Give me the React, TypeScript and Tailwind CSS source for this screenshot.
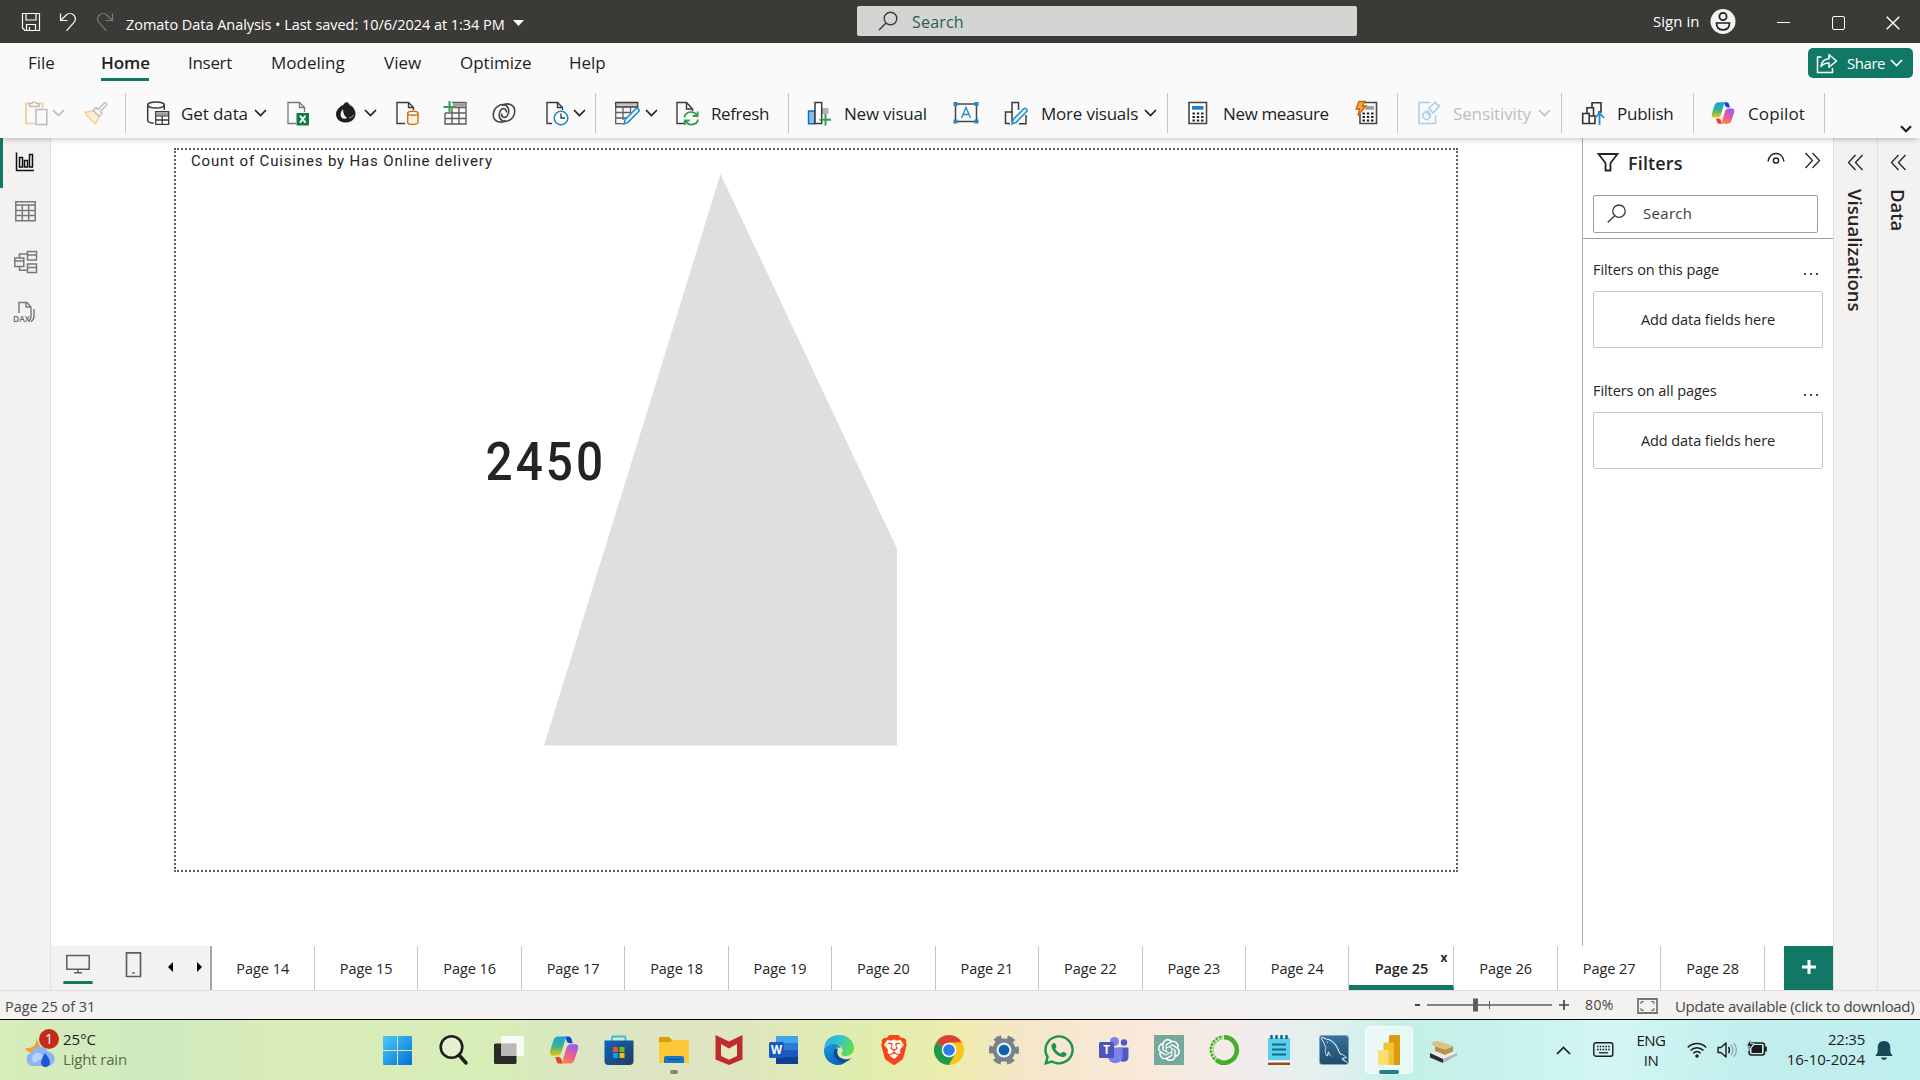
import React, { ReactNode } from 'react';
import { SiOpenai, SiBrave } from 'react-icons/si';
import { FaWhatsapp } from 'react-icons/fa';
import { GrMysql } from 'react-icons/gr';

const DARK = '#3b3a39';
const BLUE = '#1e8bcd';
const GREEN = '#2f9e50';

type IconProps = { className?: string; size?: number; children: ReactNode };

function Icon({ className = '', size = 24, children }: IconProps) {
  return (
    <svg
      viewBox={`0 0 ${size} ${size}`}
      width={size}
      height={size}
      fill="none"
      strokeWidth="1.3"
      className={`block shrink-0 overflow-visible ${className}`}
    >
      {children}
    </svg>
  );
}

function Chevron({ className = '', color = '#201f1e' }: { className?: string; color?: string }) {
  return (
    <svg width="13" height="8" viewBox="0 0 13 8" fill="none" className={`block shrink-0 ${className}`}>
      <path d="M1 1l5.5 5.5L12 1" stroke={color} strokeWidth="1.7" />
    </svg>
  );
}

function Divider({ className = '' }: { className?: string }) {
  return <div className={`h-10 w-px shrink-0 bg-[#c8c6c4] ${className}`} />;
}

function Label({ className = '', children }: { className?: string; children: ReactNode }) {
  return <span className={`mt-px shrink-0 pl-px text-[17px] whitespace-nowrap ${className}`}>{children}</span>;
}

function Pencil() {
  return (
    <path
      d="M9 23l1.2-4.6L20.6 8a1.9 1.9 0 0 1 2.8 2.8L13 21.4 9 23z"
      fill="#e8f4fc"
      stroke={BLUE}
      strokeWidth="1.5"
    />
  );
}

function CopilotMark({ className, size = 24 }: { className?: string; size?: number }) {
  return (
    <svg viewBox="0 0 24 24" width={size} height={size} className={`block shrink-0 ${className ?? ''}`}>
      <defs>
        <linearGradient id="cpA" x1="0" y1="0" x2="0" y2="1">
          <stop offset="0" stopColor="#12a4e8" />
          <stop offset="0.5" stopColor="#39b38a" />
          <stop offset="1" stopColor="#f2c511" />
        </linearGradient>
        <linearGradient id="cpB" x1="0.6" y1="0" x2="0.2" y2="1">
          <stop offset="0" stopColor="#9b5bf0" />
          <stop offset="0.5" stopColor="#ee5a9b" />
          <stop offset="1" stopColor="#ff8a3c" />
        </linearGradient>
      </defs>
      <path d="M13 1.2h2.6c1.4 0 2 .8 2.5 2.3l.9 3h-2.2c-1.6 0-2.4-.8-2.9-2.4L13 1.2z" fill="#1546c9" />
      <path d="M7.6 1.2h7.6c-1.2 0-1.8 1-2.2 2.4L10.2 13c-.6 2.3-1.6 3.6-4 3.6H2.9C.8 16.6.3 14.7.9 12.6L3.4 4.7C4.2 2.2 5.4 1.2 7.6 1.2z" fill="url(#cpA)" />
      <path d="M11 22.8H8.4c-1.4 0-2-.8-2.5-2.3L5 17.5h2.2c1.6 0 2.4.8 2.9 2.4l.9 2.9z" fill="#e8412c" />
      <path d="M16.4 22.8H8.8c1.2 0 1.8-1 2.2-2.4L13.8 11c.6-2.3 1.6-3.6 4-3.6h3.3c2.1 0 2.6 1.9 2 4l-2.5 7.9c-.8 2.5-2 3.5-4.2 3.5z" fill="url(#cpB)" />
    </svg>
  );
}

function TitleBar() {
  return (
    <header className="flex h-[43px] shrink-0 items-start bg-[#3b3a37] text-white">
      <Icon size={20} className="mt-3 ml-[21px]">
        <path d="M1.5 1.5h17v17H4L1.5 16zM5 1.5V8h10V1.5M5.5 18.5v-6h9v6M8.500 15v3" stroke="#fff" strokeWidth="1.2" />
      </Icon>
      <Icon size={20} className="mt-3 ml-[18px]">
        <path d="M1.5 1.5v7h7M1.8 8.2L7 3.2C9.2 1 12.5.9 14.7 3c2.3 2.2 2.3 5.5.1 7.7L7.500 18.800" stroke="#fff" strokeWidth="1.2" />
      </Icon>
      <Icon size={20} className="mt-3 ml-[16px]">
        <path d="M17.5 1.5v7h-7M17.2 8.2L12 3.2C9.800 1 6.500.9 4.300 3 2 5.200 2 8.500 4.200 10.700l7.300 8.100" stroke="#7d7b78" strokeWidth="1.2" />
      </Icon>
      <span className="mt-3.5 ml-[11px] w-[384px] text-[14.5px] leading-[21px] tracking-[-0.045px] whitespace-nowrap">
        Zomato Data Analysis • Last saved: 10/6/2024 at 1:34 PM
      </span>
      <svg width="11" height="6" viewBox="0 0 11 6" className="mt-5 ml-[3px]">
        <path d="M0 0h11L5.5 6z" fill="#fff" />
      </svg>
      <div className="mt-1.5 ml-[333px] flex h-[30px] w-[500px] items-center rounded-[2px] bg-[#d4d4d2] text-[#2a5d54]">
        <Icon size={20} className="ml-[21px]">
          <path d="M1 19l7-7" stroke="#3b3a39" strokeWidth="1.5" />
          <circle cx="12.5" cy="7.5" r="6.3" stroke="#3b3a39" strokeWidth="1.4" />
        </Icon>
        <span className="mt-px ml-[14px] text-base tracking-[0.2px]">Search</span>
      </div>
      <span className="mt-[11px] ml-[296px] w-[49px] text-[15px] leading-[21px] tracking-[0.05px] whitespace-nowrap">Sign in</span>
      <Icon size={26} className="mt-[9px] ml-2">
        <circle cx="13" cy="12.5" r="12.5" fill="#f3f2f1" />
        <circle cx="13" cy="7.5" r="3.6" stroke="#201f1e" strokeWidth="1.7" />
        <path d="M6.5 14h13c0 4.5-2.5 6.8-6.5 6.800S6.500 18.500 6.500 14z" stroke="#201f1e" strokeWidth="1.7" />
      </Icon>
      <div className="mt-[22px] ml-[41px] h-px w-[13px] bg-white" />
      <div className="mt-[16px] ml-[42px] h-[14px] w-[13px] rounded-[2px] border-[1.5px] border-white" />
      <Icon size={14} className="mt-[16px] ml-[41px]">
        <path d="M.7.7l12.600 12.600M13.300.7L.7 13.300" stroke="#fff" strokeWidth="1.4" />
      </Icon>
    </header>
  );
}

function MenuTabs() {
  return (
    <nav className="flex h-[45px] shrink-0 items-center bg-[#fafafa] pb-[5px] text-[17px] whitespace-nowrap text-[#201f1e]">
      <span className="ml-[28px] w-[73px]">File</span>
      <span className="relative w-[87px] font-semibold tracking-[-0.05px]">
        Home
        <span className="absolute -bottom-[5px] left-0 h-[3px] w-12 bg-[#117865]" />
      </span>
      <span className="w-[83px] tracking-[-0.3px]">Insert</span>
      <span className="w-[113px]">Modeling</span>
      <span className="w-[76px]">View</span>
      <span className="w-[109px]">Optimize</span>
      <span className="w-[60px]">Help</span>
      <button className="mr-[7px] ml-auto flex h-[30px] w-[105px] items-center rounded-[5px] bg-[#117865] text-[15px] text-white">
        <Icon size={22} className="ml-2">
          <path d="M5.5 5h-4v15.5h15V16" stroke="#fff" strokeWidth="1.5" />
          <path d="M5 14.5c.5-4.5 3-7.5 8-7.8V2.5L20.5 9 13 15.300v-4.200c-3.500 0-6 1-8 3.400z" stroke="#fff" strokeWidth="1.5" strokeLinejoin="round" />
        </Icon>
        <span className="ml-[9px] w-[38px] tracking-[-0.46px]">Share</span>
        <Chevron className="ml-[5px]" color="#fff" />
      </button>
    </nav>
  );
}

function Ribbon() {
  return (
    <div className="relative z-10 flex h-[50px] shrink-0 items-center bg-[#fafafa] text-[#201f1e] shadow-[0_5px_5px_-3px_rgba(0,0,0,0.2)]">
      <Icon className="ml-6">
        <path d="M5.5 2.500H2v20h9M15 2.500h3.500V7" stroke="#f5cfa3" strokeWidth="2" />
        <path d="M5.500 5.500v-3h2.700a2.200 2.200 0 0 1 4.200 0h2.700v3z" stroke="#bdbbb9" />
        <path d="M12 8.500h10.800v15H12z" stroke="#bdbbb9" strokeWidth="1.5" />
      </Icon>
      <Chevron className="ml-1" color="#bdbbb9" />
      <Icon className="ml-[19px]">
        <path d="M1 11.500l8.500-2 6 6-4 7.300C8 20 4 17 1 11.500z" fill="#fdebd6" stroke="#f5c999" />
        <path d="M9 9.500l3-3 2 2 6-6.300c1.500-1.400 3.700.6 2.300 2.200l-6 6.200 1.700 1.800-2.700 3z" stroke="#bdbbb9" />
      </Icon>
      <Divider className="ml-[17px]" />
      <Icon className="ml-5">
        <ellipse cx="10" cy="4" rx="8.300" ry="3" stroke={DARK} strokeWidth="1.5" />
        <path d="M1.700 4v15.500c0 1.300 2.500 2.500 6 2.800M18.300 4v5" stroke={DARK} strokeWidth="1.5" />
        <path d="M9.700 10.700h13v12.600h-13zM9.700 14.800h13M9.700 19h13M16.200 14.800v8.500" fill="#fff" stroke={DARK} />
        <path d="M10.300 11.300h11.800v3H10.300z" fill="#a19f9d" />
      </Icon>
      <Label className="ml-[10px] w-[72px] tracking-[-0.1px]">Get data</Label>
      <Chevron className="ml-0.5" />
      <Icon className="ml-[19px]">
        <path d="M10 22.500H2V1.500h11.500l5 5V11M13.500 1.500v5h5" stroke="#797775" />
        <path d="M10.500 12H23v12.500H10.500z" fill="#107c41" />
        <path d="M14 14.700l5.500 7M19.500 14.700l-5.500 7" stroke="#fff" strokeWidth="1.9" />
      </Icon>
      <Icon className="ml-[25px]">
        <path d="M5 6C6 4.500 8 4.500 9 3c1.500-2.500 4-2 5 0 .8 1.500 3 1.500 4.500 4 2.300 3 2.800 7 .7 10.300-2.200 3.300-5.500 4.400-9 4.200C4.500 21 1 18 1 13c0-3 1.500-5 4-7z" fill="#201f1e" />
        <path d="M8 8c-2.500 3-3.300 6.500-1 9 1.500 1.300 4 1 5-.5-2.500-1-4-4-4-8.500z" fill="#f3f2f1" />
        <path d="M14 17c2.500-.3 4-1.500 5-3.500" stroke="#6b6967" />
      </Icon>
      <Chevron className="ml-[5px]" />
      <Icon className="ml-[18px]">
        <path d="M10 22.500H2V1.500h11.500l5 5V9M13.500 1.500v5h5" stroke={DARK} strokeWidth="1.4" />
        <path d="M12.700 12.300v9.200c0 2.500 10.300 2.500 10.300 0v-9.200" fill="#fdf0e2" stroke="#d0700f" strokeWidth="1.4" />
        <ellipse cx="17.850" cy="12.300" rx="5.150" ry="2" fill="#fff" stroke="#d0700f" strokeWidth="1.4" />
      </Icon>
      <Icon className="ml-6">
        <path d="M9 1.500h14v21.500H2V12M2 12h21M2 17.500h21M9 6.500V23M16 6.500V23M11 6.500h12" stroke="#605e5c" strokeWidth="1.4" />
        <path d="M10 2.200h12.300v3.600H10z" fill="#a19f9d" />
        <path d="M6.500 0v12M.5 6h12" stroke={GREEN} strokeWidth="2" />
      </Icon>
      <Icon className="ml-[25px]">
        <path d="M14 19.500C8.500 23 1 20.500 1.300 13.500 1.600 6.500 8.500 1.800 13.500 4.300c4 2 4 7.500 1.700 10.700-2 2.500-6 1.500-5.700-2.500" stroke="#484644" strokeWidth="1.600" />
        <path d="M10 4.500C15.500 1 23 3.500 22.700 10.500c-.3 7-7.200 11.700-12.200 9.200-4-2-4-7.500-1.700-10.700 2-2.500 6-1.500 5.700 2.500" stroke="#484644" strokeWidth="1.600" />
      </Icon>
      <Icon className="ml-[29px]">
        <path d="M7 22.500H2V1.500h10.500l5 5V9M12.500 1.500v5h5" stroke={DARK} strokeWidth="1.4" />
        <circle cx="16" cy="17" r="6.800" fill="#fff" stroke={BLUE} strokeWidth="1.6" />
        <path d="M16 12.500V17h4" stroke={DARK} strokeWidth="1.4" />
      </Icon>
      <Chevron className="ml-1" />
      <Divider className="ml-[9px]" />
      <Icon className="ml-[19px]">
        <path d="M.7 1.500h22V6H.7z" fill="#c8c6c4" stroke={DARK} />
        <path d="M.7 6v16.700H8M22.700 6v2M1 11.500h15M1 17h10M8 6.500V19M15.500 6.500v5" stroke="#605e5c" />
        <Pencil />
      </Icon>
      <Chevron className="ml-[6px]" />
      <Icon className="ml-[17px]">
        <path d="M9 22.500H2V1.500h9.500l6 6.500M11.500 1.500V8h6v2" stroke={DARK} strokeWidth="1.4" />
        <path d="M9.500 16.500c.7-6 9.500-7.500 12.500-2M22.700 10.500v4.500h-5M23 18.500c-1 5.800-9.500 7-12.300 1.500M9.800 24v-4.500h5" stroke={GREEN} strokeWidth="1.8" />
      </Icon>
      <Label className="ml-[11px] w-[60px] tracking-[-0.4px]">Refresh</Label>
      <Divider className="ml-[18px]" />
      <Icon className="ml-[18px]">
        <path d="M1.500 10h6.300v12.700H1.500z" fill="#83beec" stroke="#106ebe" strokeWidth="1.4" />
        <path d="M15 7h6.500v6H15z" fill="#b5b3b1" />
        <path d="M8 1.500h6.700v21H8z" fill="#fff" stroke={DARK} strokeWidth="1.5" />
        <path d="M18.500 13v11.500M12.500 18.700H24" stroke={GREEN} strokeWidth="1.9" />
      </Icon>
      <Label className="ml-3 w-[85px] tracking-[-0.22px]">New visual</Label>
      <Icon size={26} className="ml-[25px]">
        <path d="M2.500 4h21v17.500h-21z" stroke="#484644" strokeWidth="1.5" />
        <path d="M.5 2h4v4h-4zM21.500 2h4v4h-4zM.5 19.500h4v4h-4zM21.500 19.500h4v4h-4z" fill={BLUE} />
        <path d="M8.500 18L13 7.500 17.500 18M10.200 14.500h5.600" stroke={BLUE} />
      </Icon>
      <Icon className="ml-[25px]">
        <path d="M6 22.500H1.500V11H8V1.500h6.500V9M15 22.700h7V14" stroke={DARK} strokeWidth="1.5" />
        <path d="M8 11v10" stroke={DARK} strokeWidth="1.5" />
        <g transform="translate(-1 0)"><Pencil /></g>
      </Icon>
      <Label className="ml-3 w-[100px] tracking-[-0.21px]">More visuals</Label>
      <Chevron className="ml-1" />
      <Divider className="ml-[10px]" />
      <Icon className="ml-[18px]">
        <path d="M3 1.500h17.500v21H3z" fill="#fff" stroke="#484644" strokeWidth="1.6" />
        <path d="M6 5h11.500v3.700H6z" fill="#1e7fd0" />
        <path d="M6.500 12.500h11M6.500 16h11M6.500 19.500h11" stroke="#201f1e" strokeWidth="2.2" strokeDasharray="2.4 1.9" />
      </Icon>
      <Label className="ml-3 w-[108px] tracking-[-0.36px]">New measure</Label>
      <Icon className="ml-6">
        <path d="M11 1.500h11.500v21H6V13" stroke="#484644" strokeWidth="1.6" />
        <path d="M12 5h8v3.700h-9z" fill="#a19f9d" />
        <path d="M8.500 12.500h11.500M8.500 16h11.500M8.500 19.500h11.500" stroke="#201f1e" strokeWidth="2.2" strokeDasharray="2.4 1.9" />
        <path d="M5 .5h6L8.500 5H12L4 14.500l1.500-6.500H2z" fill="#f7a83e" stroke="#c8640a" />
      </Icon>
      <Divider className="ml-[19px]" />
      <Icon className="ml-[19px]">
        <path d="M13 1.500H2v21h16.500V14" stroke="#a3cfea" strokeWidth="1.5" />
        <path d="M5.500 13.500l3-3 5 5-2.500 3c-2 1-6-2-5.500-5zM10 9l4 5M12 7l6-5.500 4 4L16 12z" stroke="#a3cfea" strokeWidth="1.5" />
        <path d="M18 1.500l1.500-1M21 5l2-1.500" stroke="#a3cfea" strokeWidth="1.5" />
      </Icon>
      <Label className="ml-[11px] w-[80px] tracking-[-0.13px] text-[#c1bfbd]">Sensitivity</Label>
      <Chevron className="ml-[6px]" color="#c1bfbd" />
      <Divider className="ml-[10px]" />
      <Icon className="ml-[19px]">
        <path d="M1.700 12.500h6.500v10H1.700zM6 12V6.700h6.500V15M11 6.500V1.700h9V11h-3M8.500 22.500H14V15H8.500" stroke="#323130" strokeWidth="1.6" />
        <path d="M18.500 24V12M14 17l4.500-5 4.500 5" stroke={BLUE} strokeWidth="1.8" />
      </Icon>
      <Label className="ml-[11px] w-[59px] tracking-[-0.24px]">Publish</Label>
      <Divider className="ml-[18px]" />
      <CopilotMark className="ml-[17px]" />
      <Label className="ml-3 w-[60px] tracking-[0.1px]">Copilot</Label>
      <Divider className="ml-[17px]" />
      <svg width="12" height="8" viewBox="0 0 12 8" className="mb-[5px] ml-[75px] self-end" fill="none">
        <path d="M1 1.200L6 6.200l5-5" stroke="#201f1e" strokeWidth="2.3" />
      </svg>
    </div>
  );
}

function ViewRail() {
  return (
    <aside className="flex w-[51px] shrink-0 flex-col border-r border-[#e1dfdd] bg-[#f3f2f1]">
      <div className="flex h-[50px] items-center border-l-[3px] border-[#117865] pl-3">
        <Icon size={20} className="-mt-0.5">
          <path d="M1.500.5v18h17.500M4.500 5.500h3v9.500h-3zM9.500 8.500h3V15h-3zM14.500 2.500h3V15h-3z" stroke="#111" strokeWidth="1.5" />
        </Icon>
      </div>
      <div className="flex h-[50px] items-center pl-[15px]">
        <Icon size={21} className="-mt-1">
          <path d="M.8.8h19.400v19H.8zM.8 4h19.400M.8 9.500h19.400M.8 14.500h19.400M7.300 4v16M13.700 4v16" stroke="#7a7876" strokeWidth="1.5" />
        </Icon>
      </div>
      <div className="flex h-[50px] items-center pl-[14px]">
        <Icon size={24} className="-mt-[3px]">
          <path d="M13.500 1.500h9v8.500h-9zM13.500 5h9M13.500 14h9v8.500h-9zM13.500 17.500h9M.8 8h9v8.500h-9zM.8 11h9M5.500 8V4h8M5.500 16.500v3.700h8" stroke="#7a7876" strokeWidth="1.5" />
        </Icon>
      </div>
      <div className="flex h-[50px] items-center pl-[13px]">
        <svg width="24" height="24" viewBox="0 0 24 24" fill="none" className="-mt-0.5">
          <path d="M6 13V2.500h8l4 4.500v9c0 3-1 4.500-3 5M13 2.500V7h5M21 9v7c0 2.500-1 4.500-3 5.500" stroke="#7a7876" strokeWidth="1.4" />
          <text x="0" y="21.500" fontSize="8.5" fontWeight="600" fontFamily="Open Sans, sans-serif" fill="#6a6866">DAX</text>
        </svg>
      </div>
    </aside>
  );
}

function Canvas() {
  return (
    <main className="flex flex-1 bg-white pt-[10px] pl-[123px]">
      <div className="h-[724px] w-[1284px] border-2 border-dotted border-[#605e5c]">
        <div className="h-[21px] pt-px pl-[15px] font-['Roboto'] text-[15px] leading-[21px] tracking-[0.84px] whitespace-nowrap text-[#252423]">
          Count of Cuisines by Has Online delivery
        </div>
        <svg width="1280" height="699" viewBox="176 171 1280 699" className="block">
          <path d="M720.500 174L897 548.500V745.500H544z" fill="#dfdfdd" />
          <text
            transform="translate(485.500 480) scale(.9 1)"
            fontFamily="Roboto, sans-serif"
            fontSize="53"
            fontWeight="500"
            letterSpacing="3.400"
            fill="#252423"
          >
            2450
          </text>
        </svg>
      </div>
    </main>
  );
}

function DoubleChevron({ flip = false, className = '' }: { flip?: boolean; className?: string }) {
  return (
    <Icon size={17} className={className}>
      <path d={flip ? 'M8.500 1L1.500 8.500l7 7.500M15.500 1l-7 7.500 7 7.500' : 'M1.500 1l7 7.500-7 7.500M8.500 1l7 7.500-7 7.500'} stroke="#252423" strokeWidth="1.3" />
    </Icon>
  );
}

function FilterGroup({ title }: { title: string }) {
  return (
    <section className="pr-[10px] pl-[10px] text-[14.5px] tracking-[-0.07px] text-[#252423]">
      <div className="flex h-[22px] items-center justify-between">
        <span className="whitespace-nowrap">{title}</span>
        <svg width="14" height="2" viewBox="0 0 14 2" className="mt-2 mr-[5px]" fill="#484644">
          <path d="M0 0h2v2H0zM6 0h2v2H6zM12 0h2v2h-2z" />
        </svg>
      </div>
      <div className="mt-[10px] flex h-[57px] items-center justify-center rounded-[2px] border border-[#c8c6c4]">
        Add data fields here
      </div>
    </section>
  );
}

function FiltersPane() {
  return (
    <aside className="w-[251px] shrink-0 border-l border-[#b3b0ad] bg-white">
      <div className="flex h-[57px] items-start pt-[14px] pl-[14px]">
        <Icon size={22} className="mt-px">
          <path d="M1.500 1h19l-7 9v7.500h-5V10z" stroke="#252423" strokeWidth="1.8" />
        </Icon>
        <span className="ml-[9px] text-lg leading-[23px] font-semibold tracking-[0.15px] text-[#252423]">Filters</span>
        <Icon size={18} className="-mt-px ml-auto">
          <path d="M1 10.500c1-5 4-8 8-8s7 3 8 8" stroke="#252423" strokeWidth="1.4" />
          <circle cx="9" cy="9.500" r="2.600" stroke="#252423" strokeWidth="1.5" />
        </Icon>
        <DoubleChevron className="mr-3 ml-[19px]" />
      </div>
      <div className="mb-[5px] ml-[10px] flex h-[38px] w-[225px] items-center rounded-[2px] border border-[#a19f9d] text-[15px] text-[#3b3a39]">
        <Icon size={19} className="-mt-0.5 ml-[13px]">
          <path d="M.7 18.500L8 11.500" stroke="#3b3a39" />
          <circle cx="12" cy="7.200" r="6.200" stroke="#3b3a39" />
        </Icon>
        <span className="-mt-0.5 ml-[17px] tracking-[0.3px]">Search</span>
      </div>
      <div className="mb-5 border-t border-[#a19f9d]" />
      <FilterGroup title="Filters on this page" />
      <div className="h-8" />
      <FilterGroup title="Filters on all pages" />
    </aside>
  );
}

function SideRail({ title, className }: { title: string; className: string }) {
  return (
    <aside className={`flex shrink-0 flex-col items-start border-l border-[#e1dfdd] bg-[#f3f2f1] pt-4 ${className}`}>
      <DoubleChevron flip />
      <span className="mt-[18px] -ml-1 w-6 text-[18.5px] leading-6 font-semibold text-[#252423] [writing-mode:vertical-rl]">{title}</span>
    </aside>
  );
}

const pages = [14, 15, 16, 17, 18, 19, 20, 21, 22, 23, 24, 25, 26, 27, 28];

function PageTabs() {
  return (
    <div className="flex h-11 shrink-0 bg-white text-[14.5px] tracking-[-0.05px] text-[#252423]">
      <div className="flex w-[160.5px] shrink-0 border-r-2 border-[#a8a6a4] bg-[#f3f2f1]">
        <div className="ml-3 flex w-[30px] flex-col items-center pt-[8px]">
          <Icon size={24}>
            <path d="M.8 1.500h22.400v13.700H.8zM12 15v3.500M8 18.800h8" stroke="#605e5c" strokeWidth="1.5" />
          </Icon>
          <div className="mt-[3px] h-[3px] w-[30px] shrink-0 rounded-sm bg-[#117865]" />
        </div>
        <Icon size={26} className="mt-[6px] ml-7">
          <path d="M5.500.8h14v23.700h-14zM11.200 21h2.600" stroke="#605e5c" strokeWidth="1.7" />
        </Icon>
        <svg width="5" height="10" viewBox="0 0 5 10" className="mt-4 ml-[21px]"><path d="M5 0v10L0 5z" /></svg>
        <svg width="5" height="10" viewBox="0 0 5 10" className="mt-4 ml-[24px]"><path d="M0 0v10l5-5z" /></svg>
      </div>
      {pages.map((n) =>
        n === 25 ? (
          <div key={n} className="relative flex w-[105px] shrink-0 items-center justify-center border-r border-b-[5px] border-r-[#c8c6c4] border-b-[#117865] pt-[6px] font-semibold">
            Page 25
            <span className="absolute top-[3px] right-[6px] text-[12px] font-bold">x</span>
          </div>
        ) : (
          <div key={n} className="flex w-[103.46px] shrink-0 items-center justify-center border-r border-[#c8c6c4] pt-px">
            Page {n}
          </div>
        ),
      )}
      <div className="ml-auto flex w-[49px] items-center justify-center bg-[#117865] pb-[3px]">
        <svg width="14" height="14" viewBox="0 0 14 14"><path d="M7 0v14M0 7h14" stroke="#fff" strokeWidth="3" /></svg>
      </div>
    </div>
  );
}

function StatusBar() {
  return (
    <footer className="flex h-[30px] shrink-0 items-center border-t border-b border-t-[#e1dfdd] border-b-black bg-[#f3f2f1] text-[14.5px] whitespace-nowrap text-[#484644]">
      <span className="mt-[3px] ml-[5px] tracking-[-0.05px]">Page 25 of 31</span>
      <div className="ml-auto h-0.5 w-[5px] bg-[#484644]" />
      <svg width="126" height="14" viewBox="0 0 126 14" className="ml-[7px]">
        <path d="M0 7h125" stroke="#605e5c" strokeWidth="1.5" />
        <path d="M62.500 3v8" stroke="#605e5c" />
        <path d="M46 .5h5v13h-5z" fill="#605e5c" />
      </svg>
      <svg width="10" height="10" viewBox="0 0 10 10" className="ml-[6px]">
        <path d="M5 0v10M0 5h10" stroke="#484644" strokeWidth="1.7" />
      </svg>
      <span className="-mt-px ml-4 w-[31px] text-[14px] tracking-[0.4px]">80%</span>
      <svg width="21" height="16" viewBox="0 0 21 16" fill="none" className="mt-0.5 ml-[21px]">
        <path d="M1 1h19v14H1z" stroke="#797775" strokeWidth="1.8" />
        <path d="M4 6V3.700h3M14 3.700h3V6M17 10v2.300h-3M7 12.300H4V10" stroke="#605e5c" />
      </svg>
      <span className="mt-[3px] ml-[17px] w-[245px] text-[15px] tracking-[-0.32px]">Update available (click to download)</span>
    </footer>
  );
}

function TaskIcon({ children }: { children: ReactNode }) {
  return (
    <svg viewBox="0 0 30 30" width="30" height="30" fill="none" className="block shrink-0 overflow-visible">
      {children}
    </svg>
  );
}

function TaskbarApps() {
  return (
    <div className="ml-[255px] flex items-center gap-[25px]">
      <TaskIcon>
        <defs>
          <linearGradient id="win" x1="0" y1="0" x2="1" y2="1">
            <stop offset="0" stopColor="#4cc9fa" /><stop offset="1" stopColor="#0071d4" />
          </linearGradient>
        </defs>
        <path d="M-1 2a1 1 0 0 1 1-1h13v14H-1zM14 1h13a1 1 0 0 1 1 1v13H14zM-1 16h14v14H0a1 1 0 0 1-1-1zM14 16h14v13a1 1 0 0 1-1 1H14z" fill="url(#win)" />
      </TaskIcon>
      <TaskIcon>
        <circle cx="12.500" cy="12" r="10.800" fill="#e6efcf" stroke="#201f1e" strokeWidth="2.6" />
        <path d="M20 20l7 8" stroke="#201f1e" strokeWidth="3.5" strokeLinecap="round" />
      </TaskIcon>
      <TaskIcon>
        <rect x="0" y="8.500" width="22.500" height="20.500" rx="1.500" fill="#2b2a29" />
        <rect x="7" y="1" width="23" height="20" rx="1.500" fill="#fff" fillOpacity="0.85" />
        <path d="M7 8.500h15.500V21H7z" fill="#b9b9b7" />
      </TaskIcon>
      <CopilotMark size={30} />
      <TaskIcon>
        <defs><linearGradient id="store" x1="0" y1="0" x2="1" y2="1"><stop stopColor="#0a67b9" /><stop offset="1" stopColor="#263a66" /></linearGradient></defs>
        <path d="M8 6V2.500a1 1 0 0 1 1-1h11.500a1 1 0 0 1 1 1V6" stroke="#2cc0ef" strokeWidth="1.8" />
        <path d="M.5 5.500h29V26a4 4 0 0 1-4 4h-21a4 4 0 0 1-4-4z" fill="url(#store)" />
        <path d="M9 12h5v5H9z" fill="#f25022" /><path d="M15.500 12h5v5h-5z" fill="#7fba00" />
        <path d="M9 18h5v5H9z" fill="#00a4ef" /><path d="M15.500 18h5v5h-5z" fill="#ffb900" />
      </TaskIcon>
      <div className="relative">
        <TaskIcon>
          <path d="M0 3a1 1 0 0 1 1-1h9l3 3v4H0z" fill="#dd9d0a" />
          <path d="M0 7h11l3-2h15a1 1 0 0 1 1 1v21a1 1 0 0 1-1 1H1a1 1 0 0 1-1-1z" fill="#fdc938" />
          <path d="M5 28v-5a2 2 0 0 1 2-2h16a2 2 0 0 1 2 2v5z" fill="#1576c4" />
          <path d="M8.500 24.500h13" stroke="#0b4f91" />
        </TaskIcon>
        <span className="absolute top-[35px] left-[11px] h-1 w-2 rounded-full bg-[#83896b]" />
      </div>
      <TaskIcon>
        <path d="M1.500 0L15 6.500 28.500 0v24.500L15 30 1.500 24.500z" fill="#bf2c30" />
        <path d="M7 9l8 4.500L23 9v12l-8 3.700L7 21z" fill="#e4e8b8" />
      </TaskIcon>
      <TaskIcon>
        <path d="M7 1h22v7.200H7z" fill="#41a5ee" /><path d="M7 8h22v7H7z" fill="#2b7cd3" />
        <path d="M7 15h22v7H7z" fill="#185abd" /><path d="M7 22h22v7H7z" fill="#103f91" />
        <rect x="0" y="7" width="15" height="16" rx="1.500" fill="#185abd" />
        <text x="7.500" y="19" textAnchor="middle" fontSize="11.500" fontWeight="700" fontFamily="Open Sans, sans-serif" fill="#fff">W</text>
      </TaskIcon>
      <TaskIcon>
        <defs>
          <linearGradient id="edgeA" x1="0" y1="0" x2="1" y2="0.400"><stop stopColor="#2aa9e0" /><stop offset="0.5" stopColor="#2fc1cf" /><stop offset="1" stopColor="#61dc55" /></linearGradient>
          <linearGradient id="edgeB" x1="0" y1="0" x2="0.600" y2="1"><stop stopColor="#1a9de0" /><stop offset="1" stopColor="#0b63b8" /></linearGradient>
        </defs>
        <path d="M0 13C1 5 7 0 15 0c9 0 15 6 15 13 0 5-4 8-8.500 8-3.500 0-5-1.500-3.500-3.500 1.500-2.500.5-6-3.500-7.500C8 7.500 2 9 0 13z" fill="url(#edgeA)" />
        <path d="M0 14C2 9 8 7.500 13 9.500c2 .8 3.500 2.500 4 4-3-2.500-7-.5-7 3.500 0 6 6 10.500 13 9-2.500 2.500-5.500 4-9 4C6 30-1 23 0 14z" fill="url(#edgeB)" />
        <path d="M11 13.500c-3 5-1 11 5 13 4 1.200 8 .5 11.500-3.500-3 1.500-7 2-10.500 0-3.500-2-4.500-5.500-3-9.500z" fill="#11499b" />
      </TaskIcon>
      <div className="relative flex size-[30px] items-center justify-center">
        <svg viewBox="0 0 30 30" width="30" height="30" className="absolute"><path d="M8 6h14v16l-7 5-7-5z" fill="#fff" /></svg>
        <SiBrave size={30} color="#fb4318" className="relative" />
      </div>
      <TaskIcon>
        <path d="M15 15L2 7.500A15 15 0 0 1 28 7.500z" fill="#dd4132" />
        <path d="M2 7.500A15 15 0 0 0 15 30l6.500-11.200L15 15z" fill="#1f9a4a" />
        <path d="M28 7.500A15 15 0 0 1 15 30l7-12V7.500z" fill="#fcc419" />
        <path d="M15 7.500h13L22 18z" fill="#fcc419" />
        <circle cx="15" cy="15" r="7.300" fill="#fff" /><circle cx="15" cy="15" r="5.800" fill="#2f7ceb" />
      </TaskIcon>
      <TaskIcon>
        <circle cx="15" cy="15" r="11.500" fill="#77828c" />
        <circle cx="15" cy="15" r="12.500" stroke="#77828c" strokeWidth="5" strokeDasharray="7.200 5.890" strokeDashoffset="3.600" />
        <circle cx="15" cy="15" r="7.500" fill="#e9eef2" /><circle cx="15" cy="15" r="5.300" fill="#0f62b0" />
      </TaskIcon>
      <FaWhatsapp size={34} color="#1c9158" className="-m-0.5 shrink-0" />
      <TaskIcon>
        <circle cx="25" cy="7.500" r="3.200" fill="#5059c9" /><path d="M20 12.500h9.500V22a4.800 4.800 0 0 1-9.500 1z" fill="#5059c9" />
        <circle cx="15.500" cy="6.500" r="4.500" fill="#7b83eb" /><path d="M9 12.500h14.500V21a7 7 0 0 1-14.500 0z" fill="#7b83eb" />
        <rect x="0" y="7" width="15" height="16" rx="1.500" fill="#4b53bc" />
        <text x="7.500" y="19" textAnchor="middle" fontSize="11.500" fontWeight="700" fontFamily="Open Sans, sans-serif" fill="#fff">T</text>
      </TaskIcon>
      <div className="flex size-[30px] items-center justify-center bg-[#75a99c]"><SiOpenai size={22} color="#fff" /></div>
      <TaskIcon>
        <path d="M15 2.300A12.700 12.700 0 1 1 8 25.500" stroke="#43b02a" strokeWidth="4.6" />
        <path d="M9 26A12.700 12.700 0 0 1 14 2.300" stroke="#43b02a" strokeWidth="4" strokeDasharray="2.5 1" />
        <path d="M8 24A11.700 11.700 0 0 1 13 3.300" stroke="#f4ece2" strokeWidth="0.8" />
      </TaskIcon>
      <TaskIcon>
        <path d="M4 3h22v22.500H4z" fill="#5fcdee" />
        <path d="M4 25.500h22V28H4z" fill="#fff" /><path d="M4 27.500h22V30H4z" fill="#9c4c12" />
        <path d="M8 9.500h14M8 14.500h14M8 19.500h14" stroke="#0c6c8c" strokeWidth="2" />
        <path d="M7.500 0v4M12.500 0v4M17.500 0v4M22.500 0v4" stroke="#0c6c8c" strokeWidth="2.5" />
      </TaskIcon>
      <div className="flex size-[30px] items-center justify-center rounded-[3px] border border-[#7ea6c0] bg-linear-to-b from-[#37719b] to-[#1d4d6c]">
        <GrMysql size={27} color="#dce8f0" />
      </div>
      <div className="-mx-[9px] flex size-12 flex-col items-center rounded-[5px] border border-white/60 bg-white/60 pt-2">
        <TaskIcon>
          <path d="M15 1a1 1 0 0 1 1-1h9a1 1 0 0 1 1 1v29H15z" fill="#dd9a10" />
          <path d="M9.500 8.500a1 1 0 0 1 1-1H19a1 1 0 0 1 1 1V30H9.500z" fill="#f2c230" />
          <path d="M4 16a1 1 0 0 1 1-1h8.500a1 1 0 0 1 1 1v14H5a1 1 0 0 1-1-1z" fill="#fbdf72" />
        </TaskIcon>
        <span className="mt-[5px] h-1 w-5 shrink-0 rounded-full bg-[#22808e]" />
      </div>
      <TaskIcon>
        <path d="M1 18l13-4 14 4-14 6z" fill="#ececec" /><path d="M1 18l13 6v4L1 22.500z" fill="#2b2b2b" /><path d="M14 24l14-6v2.500L14 28z" fill="#b5b5b5" />
        <path d="M6 11l10 3.500 8-3v5l-8 3.500-10-4z" fill="#b8914a" />
        <path d="M2 7.500L9 6l15 5-8 3.500L4 10.500z" fill="#dfc07c" />
      </TaskIcon>
    </div>
  );
}

function Taskbar() {
  return (
    <div className="flex h-[60px] shrink-0 items-center bg-[linear-gradient(90deg,#d7edb9_0px,#cfeabf_150px,#d8ecb8_260px,#d7edb8_500px,#dce5c4_600px,#dfe6bf_740px,#dfedae_860px,#eeecae_960px,#f4e6c8_1020px,#f9e9d9_1140px,#f0edee_1260px,#dff0ee_1340px,#c2f0e6_1400px,#c9f2ee_1520px,#d2f6f5_1610px,#bfeeec_1760px,#c0efef_1920px)] text-[15px] whitespace-nowrap text-[#1b1b1b]">
      <svg width="36" height="38" viewBox="0 0 36 38" className="-mt-1 ml-6 shrink-0">
        <path d="M12 9c1 6-2 11-11 10 3 6 10 6 16 0z" fill="#f0a12a" />
        <path d="M8 37a7 7 0 0 1-.5-13.500A9 9 0 0 1 24 22.500a7.300 7.300 0 0 1 .5 14.500z" fill="#8fb4f2" />
        <path d="M10 34a6 6 0 0 1 2-10c4-1 7 2 7 5z" fill="#b9d2fa" />
        <path d="M21 24c3 4 5 7 5 9.500a4.500 4.500 0 0 1-9 0C17 31 19 28 21 24z" fill="#1957d8" />
        <circle cx="25" cy="10" r="10" fill="#c42b1c" />
        <text x="25" y="15" textAnchor="middle" fontSize="14" fontFamily="Open Sans, sans-serif" fill="#fff">1</text>
      </svg>
      <div className="-mt-[3px] ml-[3px] w-[66px] leading-5">
        <div>25°C</div>
        <div className="tracking-[-0.17px] text-[#5a6b4b]">Light rain</div>
      </div>
      <TaskbarApps />
      <svg width="15" height="9" viewBox="0 0 15 9" fill="none" className="ml-[97px] shrink-0"><path d="M1 8l6.500-6.500L14 8" stroke="#1b1b1b" strokeWidth="1.7" /></svg>
      <svg width="21" height="15" viewBox="0 0 21 15" fill="none" className="-mt-px ml-[22px] shrink-0">
        <rect x=".8" y=".8" width="19" height="13.400" rx="2" stroke="#1b1b1b" strokeWidth="1.4" />
        <path d="M4 4.500h13M4 7.500h13" stroke="#1b1b1b" strokeWidth="1.5" strokeDasharray="1.6 1.2" /><path d="M6 10.800h9" stroke="#1b1b1b" strokeWidth="1.3" />
      </svg>
      <div className="-mt-px ml-[22px] w-[30px] text-center leading-5 tracking-[-0.5px]">
        <div>ENG</div>
        <div>IN</div>
      </div>
      <Icon size={20} className="-mt-px ml-[21px]">
        <path d="M.8 7.500c5.300-5.300 13.100-5.300 18.400 0M3.500 10.500c3.800-3.800 9.200-3.800 13 0M6.300 13.300c2.200-2.200 5.200-2.200 7.400 0" stroke="#1b1b1b" strokeWidth="1.5" />
        <circle cx="10" cy="16" r="1.700" fill="#1b1b1b" />
      </Icon>
      <Icon size={20} className="-mt-px ml-[10px]">
        <path d="M1 7.500h3L9 3v14l-5-4.500H1z" stroke="#1b1b1b" strokeWidth="1.4" strokeLinejoin="round" />
        <path d="M11.500 7c1.300 2 1.300 4.300 0 6.200" stroke="#1b1b1b" strokeWidth="1.4" />
        <path d="M14 5c2.400 3.200 2.400 7 0 10M16.700 3c3.400 4.400 3.400 9.600 0 14" stroke="#8ab0b0" strokeWidth="1.3" />
      </Icon>
      <Icon size={22} className="-mt-1 ml-[9px]">
        <rect x="3" y="6" width="15.500" height="12" rx="2.500" stroke="#1b1b1b" strokeWidth="1.5" />
        <path d="M5.500 11l3-3h7.500v8H5.500zM19 9.500h1.800v5H19z" fill="#1b1b1b" />
        <path d="M5 1.500L.5 9h3L2 14l6-7.500H4.500z" fill="#1b1b1b" stroke="#c4efed" strokeWidth="0.8" />
      </Icon>
      <div className="-mt-[3px] ml-[15px] w-[82px] text-right leading-5">
        <div className="tracking-[-0.25px]">22:35</div>
        <div>16-10-2024</div>
      </div>
      <Icon size={20} className="ml-[9px]">
        <path d="M10 1c4 0 6.300 2.800 6.300 6.500v4.500l2 3.500v.5H1.700v-.5l2-3.500V7.500C3.700 3.800 6 1 10 1zM7 17.500h6c-.3 1.500-1.500 2.300-3 2.300s-2.700-.8-3-2.300z" fill="#16485a" />
      </Icon>
    </div>
  );
}

export default function App() {
  return (
    <div className="flex h-[1080px] w-[1920px] flex-col overflow-hidden bg-white font-['Open_Sans',sans-serif]">
      <TitleBar />
      <MenuTabs />
      <Ribbon />
      <div className="flex min-h-0 flex-1">
        <ViewRail />
        <div className="flex w-[1782px] shrink-0 flex-col">
          <div className="flex min-h-0 flex-1">
            <Canvas />
            <FiltersPane />
          </div>
          <PageTabs />
        </div>
        <SideRail title="Visualizations" className="w-[44px] pl-[13px]" />
        <SideRail title="Data" className="w-[43px] pl-3" />
      </div>
      <StatusBar />
      <Taskbar />
    </div>
  );
}
